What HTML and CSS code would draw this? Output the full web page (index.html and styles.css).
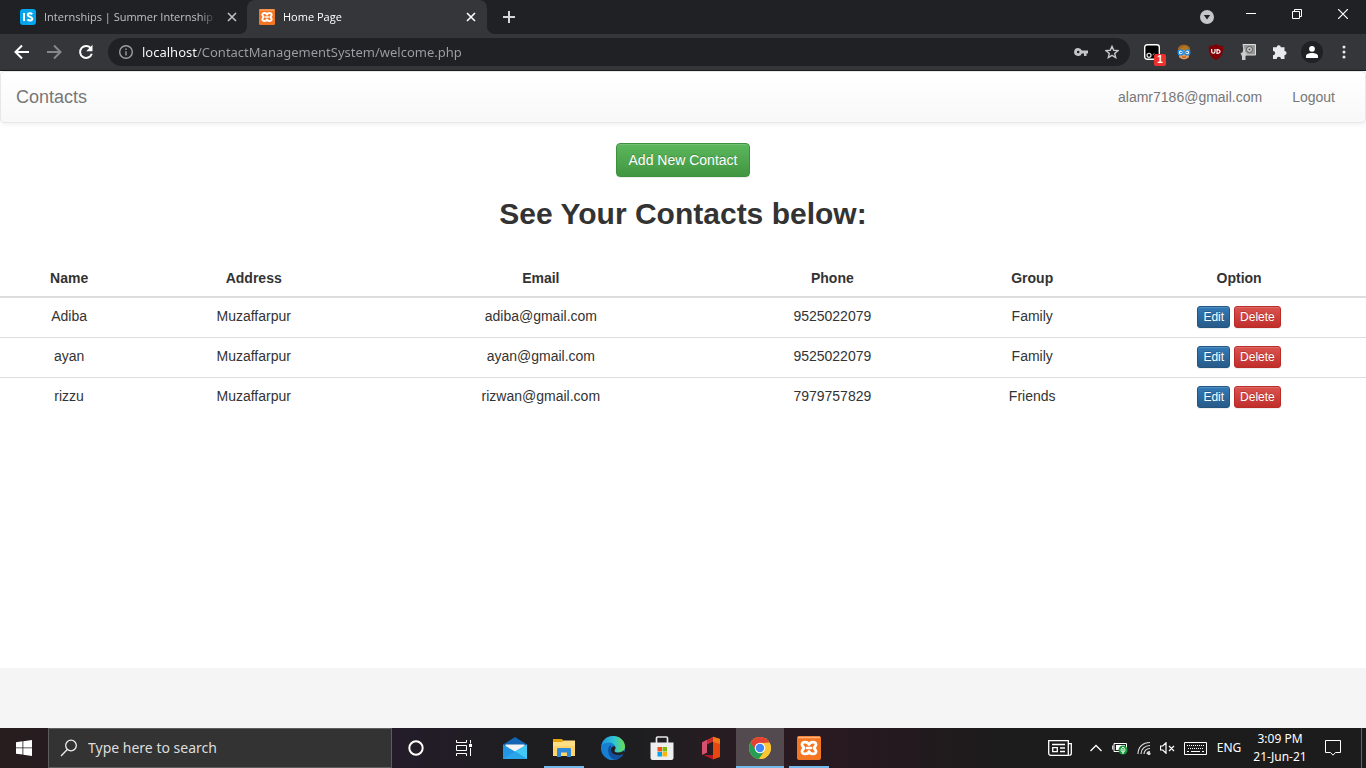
FILE: index.html
```html
<!DOCTYPE html>
<html lang="en">
<head>
<meta charset="utf-8">
<title>Home Page</title>
<link rel="stylesheet" href="styles.css">
</head>
<body>
<svg class="defs" aria-hidden="true">
  <symbol id="xampp" viewBox="0 0 24 24">
    <rect width="24" height="24" rx="2" fill="#f37623"/>
    <path d="M1 1.500h22" stroke="#ffb27c" stroke-width="1.500"/>
    <path d="M12 8.500C11 5.500 5 5 5 8.500c0 2 2 2.500 2 3.500s-2 1.500-2 3.500c0 3.500 6 3 7 0 1 3 7 3.500 7 0 0-2-2-2.500-2-3.500s2-1.500 2-3.500c0-3.500-6-3-7 0z" fill="none" stroke="#fff" stroke-width="2.800" stroke-linejoin="round"/>
    <path d="M10 12h4" stroke="#fff" stroke-width="2.500" stroke-linecap="round"/>
  </symbol>
</svg>

<header class="browser">
  <div class="tabstrip">
    <div class="tab">
      <svg class="favicon" viewBox="0 0 16 16"><rect width="16" height="16" rx="3" fill="#00a5ec"/><path d="M4 4v8M12.200 5.300C11 3.800 7.700 4 7.700 6s4.600 1.600 4.600 3.800-3.400 2.200-5 .8" fill="none" stroke="#fff" stroke-width="2"/></svg>
      <span class="tab-title">Internships | Summer Internship 2</span>
      <button class="tab-close" aria-label="Close tab"><svg viewBox="0 0 10 10"><path d="M1 1l8 8M9 1L1 9"/></svg></button>
    </div>
    <div class="tab tab-active">
      <svg class="favicon"><use href="#xampp"/></svg>
      <span class="tab-title">Home Page</span>
      <button class="tab-close" aria-label="Close tab"><svg viewBox="0 0 10 10"><path d="M1 1l8 8M9 1L1 9"/></svg></button>
    </div>
    <button class="new-tab" aria-label="New tab"><svg viewBox="0 0 12 12"><path d="M6 0v12M0 6h12"/></svg></button>
    <div class="window-controls">
      <button aria-label="Tab search"><svg width="14" height="14" viewBox="0 0 14 14"><circle cx="7" cy="7" r="7" fill="#c3c6ca"/><path d="M3.800 5h6.400L7 9.500z" fill="#202124"/></svg></button>
      <button aria-label="Minimize"><svg width="10" height="10" viewBox="0 0 10 10"><path d="M0 4.500h10" stroke="#fff"/></svg></button>
      <button aria-label="Restore"><svg width="10" height="10" viewBox="0 0 10 10"><path d="M.5 2.500h7v7h-7zM2.500 2.500v-2h7v7h-2" fill="none" stroke="#fff"/></svg></button>
      <button aria-label="Close"><svg width="10" height="10" viewBox="0 0 10 10"><path d="M0 0l10 10M10 0L0 10" stroke="#fff" stroke-width="1.200"/></svg></button>
    </div>
  </div>

  <div class="toolbar">
    <div class="nav-buttons">
      <button aria-label="Back"><svg viewBox="0 0 16 16"><path d="M15 8H2M8 1.500L1.500 8 8 14.500" fill="none" stroke="#fff" stroke-width="2"/></svg></button>
      <button aria-label="Forward"><svg viewBox="0 0 16 16"><path d="M1 8h13M8 1.500L14.500 8 8 14.500" fill="none" stroke="#85878a" stroke-width="2"/></svg></button>
      <button aria-label="Reload"><svg viewBox="0 0 16 16"><path d="M13 4.500A6 6 0 1 0 13.800 9.800" fill="none" stroke="#fff" stroke-width="2"/><path d="M14.500.8v6.400H8.200z" fill="#fff"/></svg></button>
    </div>
    <div class="omnibox">
      <svg width="14" height="14" viewBox="0 0 14 14"><circle cx="7" cy="7" r="6.300" fill="none" stroke="#9aa0a6" stroke-width="1.400"/><path d="M7 6.200v4.300M7 3.400V5" stroke="#9aa0a6" stroke-width="1.400"/></svg>
      <input class="url" type="text" aria-label="Address" value="localhost/ContactManagementSystem/welcome.php">
      <button aria-label="Passwords"><svg width="14" height="10" viewBox="0 0 14 10"><path d="M4.200 1a4 4 0 1 0 3.600 5.500H10V9h2.500V6.500H14v-3H7.800A4 4 0 0 0 4.200 1zm0 2.700a1.300 1.300 0 1 1 0 2.600 1.300 1.300 0 0 1 0-2.600z" fill="#c3c5c8" fill-rule="evenodd"/></svg></button>
      <button aria-label="Bookmark"><svg width="14" height="14" viewBox="0 0 14 14"><path d="M7 1.300l1.700 4 4.300.3-3.300 2.800 1 4.200L7 10.300l-3.700 2.300 1-4.200L1 5.600l4.300-.3z" fill="none" stroke="#c3c5c8" stroke-width="1.400"/></svg></button>
    </div>
    <div class="extensions">
      <button aria-label="Extension, 1 notification"><svg width="16" height="16" viewBox="0 0 16 16"><rect x=".7" y=".7" width="14.600" height="14.600" rx="2.500" fill="#000" stroke="#fff" stroke-width="1.400"/><circle cx="5" cy="11.300" r="2" fill="none" stroke="#ddd" stroke-width="1.300"/><path d="M8.500 11l2-1.500" stroke="#888"/></svg><span class="badge">1</span></button>
      <button aria-label="Extension"><svg width="16" height="16" viewBox="0 0 16 16"><path d="M2 8C1 3 4 .7 8 .7S15 3 14 8l-1.500 6h-9z" fill="#a5671f"/><path d="M3 7c0-3 10-3 10 0v4.500c0 5-10 5-10 0z" fill="#e99b59"/><path d="M2.500 6C5 3.500 8 3 10 2l3.500 4z" fill="#b57a26"/><circle cx="4.700" cy="8.400" r="2.500" fill="#fff" stroke="#1988e0" stroke-width="1.400"/><circle cx="11.300" cy="8.400" r="2.500" fill="#fff" stroke="#1988e0" stroke-width="1.400"/><circle cx="5" cy="8.400" r=".9" fill="#176abb"/><circle cx="11" cy="8.400" r=".9" fill="#176abb"/><path d="M6 13h4" stroke="#a15029"/></svg></button>
      <button aria-label="Ad blocker"><svg width="16" height="16" viewBox="0 0 16 16"><path d="M8 0c2 1.500 4.500 2 7.200 2C15.500 9 13.500 14 8 16 2.500 14 .5 9 .8 2 3.500 2 6 1.500 8 0z" fill="#800006"/><path d="M3.700 5v2.500c0 2.300 3.300 2.300 3.300 0V5M9 5.600v3.800c4 .3 4-4.100 0-3.800z" fill="none" stroke="#fff" stroke-width="1.200"/></svg></button>
      <button aria-label="Extension"><svg width="16" height="16" viewBox="0 0 16 16"><path d="M3 .5h12.500V11H5z" fill="#999" stroke="#ddd"/><circle cx="9.500" cy="5.500" r="3" fill="#ccc" stroke="#555"/><circle cx="9.500" cy="5.500" r="1" fill="#555"/><path d="M.5 9l2-.5 1-4 1.500.5v3l2 1-1.500 3V16H2v-3.500z" fill="#ccc"/></svg></button>
      <button aria-label="Extensions"><svg width="16" height="16" viewBox="0 0 16 16"><path d="M1 3.200h3.700a2 2 0 1 1 4.100 0h3.700V7a2 2 0 1 1 0 4.200V15H9a2 2 0 1 0-4.300 0H1v-3.700a2.100 2.100 0 1 0 0-4.300z" fill="#e8eaed"/></svg></button>
      <button aria-label="Profile"><svg width="22" height="22" viewBox="0 0 22 22"><circle cx="11" cy="11" r="11" fill="#202124"/><circle cx="11" cy="7.800" r="2.900" fill="#fff"/><path d="M5 17v-2c0-4 12-4 12 0v2z" fill="#fff"/></svg></button>
      <button aria-label="Menu"><svg width="4" height="14" viewBox="0 0 4 14" fill="#e8eaed"><circle cx="2" cy="2" r="1.500"/><circle cx="2" cy="7" r="1.500"/><circle cx="2" cy="12" r="1.500"/></svg></button>
    </div>
  </div>
</header>

<main class="page">
  <nav class="navbar">
    <a class="brand" href="#">Contacts</a>
    <div class="nav-links">
      <a href="#">alamr7186@gmail.com</a>
      <a href="#">Logout</a>
    </div>
  </nav>
  <button class="btn btn-success">Add New Contact</button>
  <h1 class="heading">See Your Contacts below:</h1>
  <table class="contacts">
    <thead>
      <tr><th>Name</th><th>Address</th><th>Email</th><th>Phone</th><th>Group</th><th>Option</th></tr>
    </thead>
    <tbody>
      <tr><td>Adiba</td><td>Muzaffarpur</td><td>adiba@gmail.com</td><td>9525022079</td><td>Family</td><td><div class="options"><button class="btn btn-xs btn-primary">Edit</button><button class="btn btn-xs btn-danger">Delete</button></div></td></tr>
      <tr><td>ayan</td><td>Muzaffarpur</td><td>ayan@gmail.com</td><td>9525022079</td><td>Family</td><td><div class="options"><button class="btn btn-xs btn-primary">Edit</button><button class="btn btn-xs btn-danger">Delete</button></div></td></tr>
      <tr><td>rizzu</td><td>Muzaffarpur</td><td>rizwan@gmail.com</td><td>7979757829</td><td>Friends</td><td><div class="options"><button class="btn btn-xs btn-primary">Edit</button><button class="btn btn-xs btn-danger">Delete</button></div></td></tr>
    </tbody>
  </table>
</main>
<footer class="page-footer"></footer>

<div class="taskbar">
  <button class="task" aria-label="Start"><svg width="16" height="16" viewBox="0 0 16 16" fill="#fff"><path d="M0 2.200l6.500-.9v6.200H0zM7.300 1.200L16 0v7.500H7.300zM0 8.300h6.500v6.300L0 13.700zM7.300 8.300H16V16l-8.700-1.300z"/></svg></button>
  <label class="search">
    <svg width="18" height="18" viewBox="0 0 18 18"><circle cx="11" cy="6.500" r="5.300" fill="none" stroke="#eee" stroke-width="1.300"/><path d="M7.300 10.500L1 17" stroke="#eee" stroke-width="1.300"/></svg>
    <input type="text" placeholder="Type here to search" aria-label="Type here to search">
  </label>
  <button class="task" aria-label="Cortana"><svg width="16" height="16" viewBox="0 0 16 16"><circle cx="8" cy="8" r="6.700" fill="none" stroke="#fff" stroke-width="2"/></svg></button>
  <button class="task" aria-label="Task View"><svg width="16" height="16" viewBox="0 0 16 16"><path d="M.5 0v2.500h10V0M.5 5.500h10v5H.5zM.5 16v-2.500h10V16M14.500 0v3.500M14.500 8v8" fill="none" stroke="#fff"/><path d="M13 4h3v3h-3z" fill="#fff"/></svg></button>
  <div class="apps">
    <button class="task" aria-label="Mail"><svg width="24" height="24" viewBox="0 0 24 24"><path d="M0 8.500L12 1l12 7.500V12H0z" fill="#1266b4"/><path d="M2.500 8.500h19V16h-19z" fill="#f4f4f4"/><path d="M0 8.500l12 7 12-7V23H0z" fill="#2298e5"/><path d="M24 8.500V23L12 15.500z" fill="#42c8f5"/><path d="M0 23l12-7.500L24 23z" fill="#2aa5e9"/></svg></button>
    <button class="task running" aria-label="File Explorer"><svg width="22" height="20" viewBox="0 0 22 20"><path d="M0 1h9l1.500 2H22v15H0z" fill="#e8a30c"/><path d="M0 4h22v14H0z" fill="#ffd56b"/><path d="M0 4h9l1.500-1.500H22V8H0z" fill="#ffdf85"/><path d="M4 19v-7.500c0-1 .5-1.500 1.500-1.500h11c1 0 1.500.5 1.500 1.500V19h-4v-4.500H8V19z" fill="#2d8ad8"/></svg></button>
    <button class="task" aria-label="Edge"><svg width="24" height="24" viewBox="0 0 24 24"><defs><linearGradient id="edgeTop"><stop stop-color="#1e95dc"/><stop offset=".55" stop-color="#31c4d4"/><stop offset="1" stop-color="#69e04a"/></linearGradient></defs><circle cx="12" cy="12" r="12" fill="#1683d2"/><path d="M.3 10C1.500 4 6 0 12 0c7 0 12 5 12 10.500 0 4-3.500 6-7 6-2.500 0-3.500-1-3.500-1.600 0-.7 1-1.200 1-3 0-3-3-5.500-6.500-5.500C4.500 6.400 1.500 7.800.3 10z" fill="url(#edgeTop)"/><path d="M9.500 9C5 12 6 21 13.500 23.800 6 25 .3 19 .3 12 1.500 8.500 5.500 7 9.500 9z" fill="#177ed0"/><path d="M9.500 9C5 12.500 7 22 14 23.700c3.500-.5 6.500-2.700 8.200-5.500-5 2.500-12 .5-12.700-4.200-.2-2 .5-3 .8-4z" fill="#124fa1"/><path d="M14.500 11c0 2-1 3.200-1 3.900 0 .6 1 1.600 3.500 1.600 2 0 4-.6 5.500-2L24 18l-2.500.5C15 20.500 10 18 9.700 14c0-2 1.500-3.500 3.300-4z" fill="#202123"/></svg></button>
    <button class="task" aria-label="Store"><svg width="24" height="24" viewBox="0 0 24 24"><path d="M6.500 7V2c0-.6.400-1 1-1h9c.6 0 1 .4 1 1v5" fill="none" stroke="#e7e7e7" stroke-width="1.700"/><path d="M.5 6.500h23V22c0 1-1 2-2 2h-19c-1 0-2-1-2-2z" fill="#eee"/><path d="M7.500 11H12v4.500H7.500z" fill="#f1511b"/><path d="M12.500 11H17v4.500h-4.500z" fill="#80bc06"/><path d="M7.500 16H12v4.500H7.500z" fill="#00a3ee"/><path d="M12.500 16H17v4.500h-4.500z" fill="#fbb60a"/></svg></button>
    <button class="task" aria-label="Office"><svg width="20" height="24" viewBox="0 0 20 24"><path d="M1 6.500L12 .8v5L6 8.500v8l-4.500 2.300L1 18z" fill="#c72a31"/><path d="M1 6.500l5-2.700V16.500l-4.500 2.300L1 18z" fill="#d55170"/><path d="M12 .8L19 3v18l-7 2.500z" fill="#e8470e"/><path d="M2.500 19H12v4.500z" fill="#b91524"/><path d="M12 .8L19 3v5l-7-2z" fill="#ef7a17"/></svg></button>
    <button class="task running current" aria-label="Chrome"><svg width="24" height="24" viewBox="0 0 24 24"><circle cx="12" cy="12" r="11" fill="#fbc730"/><path d="M12 12L2.500 6.500A11 11 0 0 0 11 23l5.500-8z" fill="#259e53"/><path d="M2.500 6.500A11 11 0 0 1 21.500 6.600L12 7v5H6z" fill="#e34133"/><path d="M12 7h9.700A11 11 0 0 1 11 23l5.500-8z" fill="#fbc730"/><circle cx="12" cy="12" r="5.300" fill="#fff"/><circle cx="12" cy="12" r="4.200" fill="#4285f4"/></svg></button>
    <button class="task running" aria-label="XAMPP"><svg width="24" height="24"><use href="#xampp"/></svg></button>
  </div>
  <div class="tray">
    <button class="news" aria-label="News"><svg width="24" height="16" viewBox="0 0 24 16"><path d="M.7.7h19.600v14.600H3C1.500 15.300.7 14.500.7 13zM20.300 3.700h3v9.600c0 1.300-.8 2-2 2" fill="none" stroke="#fff" stroke-width="1.300"/><path d="M4 4.500h13M12 8h5M12 11.500h5" stroke="#fff" stroke-width="1.300"/><path d="M4.700 7.700h4.600v4H4.700z" fill="none" stroke="#fff" stroke-width="1.300"/></svg></button>
    <button aria-label="Show hidden icons"><svg width="12" height="8" viewBox="0 0 12 8"><path d="M.5 7L6 1.500 11.500 7" fill="none" stroke="#fff" stroke-width="1.300"/></svg></button>
    <button aria-label="Battery"><svg width="16" height="14" viewBox="0 0 16 14"><path d="M2 2.500h12.500v8H2zM.7 4.500v4" fill="none" stroke="#fff"/><path d="M4 4h9v5H4z" fill="#fff"/><circle cx="11" cy="9" r="4.500" fill="#159b3a"/><path d="M11 6c-3 3-2 5 0 5s3-2 0-5zM11 8v5" fill="none" stroke="#fff"/></svg></button>
    <button aria-label="Network"><svg width="14" height="14" viewBox="0 0 14 14" fill="none" stroke="#ddd" stroke-width="1.200"><path d="M1 13C1 6 6 1.500 13 1.500M4 13c0-5 4-8.500 9-8.500M7 13c0-3 2.500-5.500 6-5.500M10 13c0-1.500 1-2.500 3-2.500"/><circle cx="12" cy="12.500" r="1" fill="#fff"/></svg></button>
    <button class="volume" aria-label="Volume"><svg width="15" height="12" viewBox="0 0 15 12"><path d="M.5 4h2.300L6 .8v10.400L2.800 8H.5zM9 4l5 5M14 4L9 9" fill="none" stroke="#fff" stroke-width="1.200"/></svg></button>
    <button class="keyboard" aria-label="Touch keyboard"><svg width="23" height="13" viewBox="0 0 23 13"><path d="M.5.5h22v12H.5z" fill="none" stroke="#fff"/><path d="M3 3.500h17M4 6.500h16" stroke="#fff" stroke-dasharray="1 1"/><path d="M3 9.500h2M7 9.500h9M18 9.500h2" stroke="#fff"/></svg></button>
    <button class="lang">ENG</button>
    <button class="clock"><span>3:09 PM</span><span>21-Jun-21</span></button>
    <button class="notify" aria-label="Notifications"><svg width="16" height="16" viewBox="0 0 16 16"><path d="M.5.500h15v12H10.500L8 15.200 5.500 12.500H.5z" fill="none" stroke="#fff"/></svg></button>
    <span class="show-desktop"></span>
  </div>
</div>
</body>
</html>
```
FILE: styles.css
```css
* { box-sizing: border-box; }

body {
  margin: 0;
  min-height: 100vh;
  display: flex;
  flex-direction: column;
  background: #fff;
  color: #333;
  font: 14px/20px "Liberation Sans", Arial, sans-serif;
}

button, input { font: inherit; color: inherit; }
button { margin: 0; padding: 0; border: 0; background: none; cursor: pointer; }
input { min-width: 0; border: 0; padding: 0; background: none; outline: 0; }
svg { display: block; flex: none; }
.defs { position: absolute; width: 0; height: 0; }

/* Browser window */
.browser {
  background: #35363a;
  border-bottom: 1px solid #1c1c1e;
  font-family: "Open Sans", "Noto Sans", sans-serif;
}
.tabstrip {
  display: flex;
  height: 34px;
  padding-left: 8px;
  background: #202124;
}
.tab {
  display: flex;
  align-items: center;
  gap: 8px;
  width: 239px;
  padding: 0 7px 0 12px;
  color: #bdc1c6;
  font-size: 11px;
}
.tab-active {
  position: relative;
  width: 240px;
  padding-right: 8px;
  background: #35363a;
  border-radius: 8px 8px 0 0;
  color: #fff;
}
.tab-active::before, .tab-active::after {
  content: "";
  position: absolute;
  bottom: 0;
  width: 8px;
  height: 8px;
}
.tab-active::before { right: 100%; background: radial-gradient(circle at 0 0, #202124 8px, #35363a 8px); }
.tab-active::after { left: 100%; background: radial-gradient(circle at 100% 0, #202124 8px, #35363a 8px); }
.favicon { width: 16px; height: 16px; }
.tab-title {
  flex: 1;
  min-width: 0;
  overflow: hidden;
  white-space: nowrap;
  -webkit-mask-image: linear-gradient(to left, transparent, #000 16px);
  mask-image: linear-gradient(to left, transparent, #000 16px);
}
.tab-close { padding: 3px; }
.tab-close svg { width: 10px; height: 10px; fill: none; stroke: currentColor; stroke-width: 1.6; }
.new-tab { padding: 0 16px; }
.new-tab svg { width: 12px; height: 12px; stroke: #d5d7da; stroke-width: 2; }
.window-controls { display: flex; align-items: flex-start; margin-left: auto; }
.window-controls button {
  display: grid;
  place-items: center;
  width: 46px;
  height: 28px;
}
.window-controls button:first-child { width: 42px; height: 34px; }

.toolbar {
  display: flex;
  align-items: center;
  height: 36px;
  padding-right: 6px;
}
.nav-buttons { display: flex; width: 108px; padding-left: 6px; }
.nav-buttons button { display: grid; place-items: center; width: 32px; height: 28px; }
.nav-buttons svg { width: 16px; height: 16px; }
.omnibox {
  flex: 1;
  display: flex;
  align-items: center;
  height: 28px;
  padding: 0 11px;
  background: #202124;
  border-radius: 14px;
}
.omnibox button { display: grid; place-items: center; width: 32px; }
.omnibox button:last-child { width: 14px; margin-left: 8px; }
.url {
  flex: 1;
  margin-left: 9px;
  font-family: "Noto Sans", "Open Sans", sans-serif;
  font-size: 13px;
  background: linear-gradient(to right, #fff 55px, #9aa0a6 55px);
  -webkit-background-clip: text;
  background-clip: text;
  -webkit-text-fill-color: transparent;
}
.extensions { display: flex; margin-left: 6px; }
.extensions button {
  position: relative;
  display: grid;
  place-items: center;
  width: 32px;
  height: 28px;
}
.badge {
  position: absolute;
  right: 2px;
  bottom: 0;
  width: 12px;
  height: 12px;
  border-radius: 2px;
  background: #ee3030;
  color: #fff;
  font: bold 10px/12px "Liberation Sans", Arial, sans-serif;
  text-align: center;
}

/* Contacts page */
.page { flex: 1; }
.navbar {
  display: flex;
  justify-content: space-between;
  align-items: center;
  min-height: 52px;
  margin-bottom: 20px;
  padding: 0 15px;
  border: 1px solid #e7e7e7;
  border-radius: 4px;
  background: linear-gradient(#fff, #f8f8f8);
  box-shadow: inset 0 1px 0 rgba(255, 255, 255, .15), 0 1px 5px rgba(0, 0, 0, .075);
}
.navbar a { color: #777; text-decoration: none; text-shadow: 0 1px 0 rgba(255, 255, 255, .25); }
.brand { font-size: 18px; }
.nav-links { display: flex; gap: 30px; padding-right: 15px; }
.btn {
  border: 1px solid;
  border-radius: 4px;
  padding: 6px 12px;
  color: #fff;
  text-shadow: 0 -1px 0 rgba(0, 0, 0, .2);
  box-shadow: inset 0 1px 0 rgba(255, 255, 255, .15), 0 1px 1px rgba(0, 0, 0, .075);
}
.btn-success { display: block; margin: 0 auto; background: linear-gradient(#5cb85c, #419641); border-color: #3e8f3e; }
.btn-primary { background: linear-gradient(#337ab7, #265a88); border-color: #245580; }
.btn-danger { background: linear-gradient(#d9534f, #c12e2a); border-color: #b92c28; }
.btn-xs { padding: 1px 5px; border-radius: 3px; font-size: 12px; line-height: 18px; }
.heading {
  margin: 20px 0 30px;
  font-size: 30px;
  line-height: 33px;
  text-align: center;
}
.contacts { width: 100%; border-collapse: collapse; text-align: center; }
.contacts th { padding: 8px; border-bottom: 2px solid #ddd; }
.contacts td { height: 40px; padding: 8px; border-top: 1px solid #ddd; vertical-align: top; }
.options { display: flex; justify-content: center; gap: 4px; }
.page-footer { height: 60px; background: #f5f5f5; }

/* Desktop taskbar */
.taskbar {
  display: flex;
  height: 40px;
  background: linear-gradient(to right, #271c1e 0, #241c2a 400px, #1e1e20 520px, #1e1e20 640px, #2b1b22 760px, #26191f 860px, #1c1c1c 1000px);
  color: #fff;
  font-family: "Noto Sans", "Open Sans", sans-serif;
}
.task {
  position: relative;
  display: grid;
  place-items: center;
  width: 48px;
}
.search {
  display: flex;
  align-items: center;
  gap: 10px;
  width: 344px;
  padding-left: 11px;
  background: #333;
  border: 1px solid #5d5d5d;
}
.search input { flex: 1; }
.search input::placeholder { color: #ddd; opacity: 1; }
.apps { display: flex; gap: 1px; margin-left: 3px; }
.running::after {
  content: "";
  position: absolute;
  left: 4px;
  right: 4px;
  bottom: 0;
  height: 2px;
  background: #76b9ed;
}
.current { background: #524a4e; }
.current::after { left: 0; right: 0; }
.tray { display: flex; margin-left: auto; font-size: 12px; }
.tray button { display: grid; place-items: center; width: 24px; }
.tray .news { width: 48px; }
.tray .volume { width: 22px; }
.tray .keyboard { width: 34px; }
.tray .lang { width: 34px; }
.tray .clock {
  width: 68px;
  align-content: center;
  line-height: 18px;
}
.tray .notify { width: 38px; }
.show-desktop { width: 5px; margin-left: 9px; border-left: 1px solid #666; }
```
